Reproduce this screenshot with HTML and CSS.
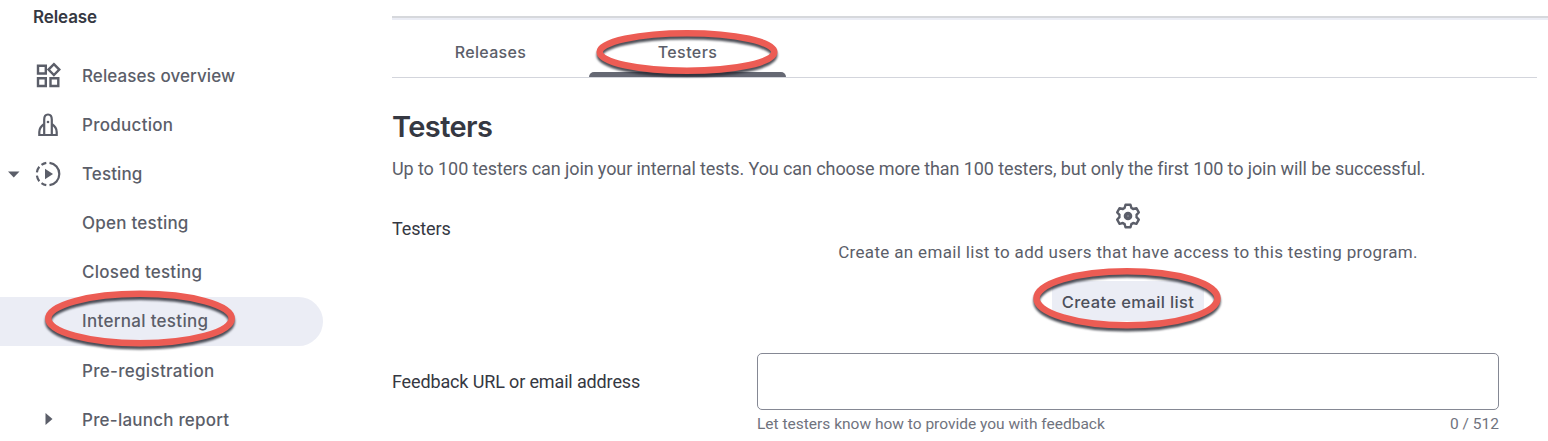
FILE: index.html
```html
<!DOCTYPE html>
<html lang="en">
<head>
<meta charset="utf-8">
<title>Internal testing</title>
<link rel="stylesheet" href="styles.css">
</head>
<body>
<div class="app">
  <nav class="sidebar">
    <h2 class="nav-title"><span class="t-release">Release</span></h2>
    <a class="nav-item">
      <span class="caret"></span>
      <svg class="icon" viewBox="0 0 28 28"><g fill="none" stroke="currentColor" stroke-width="2.4"><path d="M4 3.700h7.800v7.800H4zM4 16.200h7.800v7.800H4zM16.500 16.200h7.800v7.800h-7.800zM19.900 2.100l5.400 5.500-5.400 5.500-5.400-5.500z"/></g></svg>
      <span class="t-overview">Releases overview</span>
    </a>
    <a class="nav-item">
      <span class="caret"></span>
      <svg class="icon" viewBox="0 0 28 28"><g fill="none" stroke="currentColor" stroke-width="2.2"><path d="M10.200 24V8.500C10.200 5.200 11.600 3.500 14 3.500s3.800 1.700 3.800 5V24M10.200 13C8 14.500 5.300 18 5.300 21v3h17.400v-3c0-3-2.700-6.500-4.900-8"/></g><circle cx="14" cy="11" r="1.300" fill="currentColor"/></svg>
      <span class="t-production">Production</span>
    </a>
    <a class="nav-item">
      <span class="caret"><svg class="caret-icon" viewBox="0 0 12 12"><path d="M0 3.500h11.500L5.750 9.500z" fill="currentColor"/></svg></span>
      <svg class="icon" viewBox="0 0 28 28"><path d="M15.500 2.800a11.300 11.300 0 0 1 0 22.400M12.300 25.200a11.300 11.300 0 0 1-4.800-2M5.300 21.200a11.300 11.300 0 0 1-2.400-5.500M2.900 12.300a11.300 11.300 0 0 1 2.400-5.500M7.500 4.800a11.300 11.300 0 0 1 4.800-2" fill="none" stroke="currentColor" stroke-width="2.200"/><path d="M11 8.700v10.600l8-5.300z" fill="currentColor"/></svg>
      <span class="t-testing">Testing</span>
    </a>
    <a class="nav-item sub"><span class="t-open">Open testing</span></a>
    <a class="nav-item sub"><span class="t-closed">Closed testing</span></a>
    <a class="nav-item sub active"><span class="t-internal">Internal testing</span>
      <svg class="ring ring-nav" viewBox="0 0 200 70"><ellipse cx="100" cy="31.500" rx="91.700" ry="24.700"/></svg>
    </a>
    <a class="nav-item sub"><span class="t-prereg">Pre-registration</span></a>
    <a class="nav-item sub"><svg class="sub-caret" viewBox="0 0 8 12"><path d="M0.500 0v12L7.500 6z" fill="currentColor"/></svg><span class="t-prelaunch">Pre-launch report</span></a>
  </nav>
  <main class="content">
    <div class="top-edge"></div>
    <div class="tabs">
      <div class="tab"><span class="t-tab1">Releases</span></div>
      <div class="tab selected"><span class="t-tab2">Testers</span>
        <svg class="ring ring-tab" viewBox="0 0 200 60"><ellipse cx="100" cy="27" rx="87.300" ry="18.800"/></svg>
      </div>
    </div>
    <h1 class="heading"><span class="t-heading">Testers</span></h1>
    <p class="intro"><span class="t-intro">Up to 100 testers can join your internal tests. You can choose more than 100 testers, but only the first 100 to join will be successful.</span></p>
    <section class="row testers-row">
      <div class="label"><span class="t-label1">Testers</span></div>
      <div class="field empty">
        <svg class="gear" viewBox="0 0 28 28"><path d="M11.500 2.800h5l.9 3.200q1 .3 1.800 1l3.200-.8 2.400 4.200-2.300 2.400q.3 1.200 0 2.400l2.300 2.400-2.400 4.200-3.200-.8q-.8.7-1.800 1l-.9 3.200h-5l-.9-3.200q-1-.3-1.800-1l-3.200.8-2.400-4.200 2.300-2.400q-.3-1.200 0-2.400L3.200 10.400l2.400-4.200 3.200.8q.8-.7 1.800-1z" fill="none" stroke="currentColor" stroke-width="2.400" stroke-linejoin="round"/><circle cx="14" cy="14" r="4.300" fill="currentColor"/><circle cx="14" cy="14" r="0.700" fill="#a4a7af"/></svg>
        <p class="empty-text"><span class="t-empty">Create an email list to add users that have access to this testing program.</span></p>
        <button class="create"><span class="t-create">Create email list</span>
          <svg class="ring ring-create" viewBox="0 0 200 74"><ellipse cx="100" cy="33.300" rx="90.500" ry="27"/></svg>
        </button>
      </div>
    </section>
    <section class="row">
      <div class="label feedback-label"><span class="t-label2">Feedback URL or email address</span></div>
      <div class="field">
        <div class="input"></div>
        <div class="hints"><span class="t-hint">Let testers know how to provide you with feedback</span><span class="t-count">0 / 512</span></div>
      </div>
    </section>
  </main>
</div>
</body>
</html>
```
FILE: styles.css
```css
* { box-sizing: border-box; }
body { margin: 0; background: #fff; color: #5b5e69; font-family: Roboto, "Liberation Sans", sans-serif; overflow: hidden; }
h1, h2, p { margin: 0; }
.app { display: flex; width: 1548px; height: 441px; overflow: hidden; }
.sidebar { flex: none; width: 392px; font: 500 17px/20px Inter, sans-serif; }
.nav-title { height: 51px; padding: 8px 0 0 33px; font: 600 17px/18px Inter, sans-serif; letter-spacing: -.1px; color: #353842; }
.nav-item { position: relative; display: flex; align-items: center; width: 323px; height: 49.150px; white-space: nowrap; }
.nav-item > span:not(.caret) { padding-top: .4px; }
.t-overview { letter-spacing: .08px; }
.t-production { letter-spacing: .28px; }
.t-testing { letter-spacing: .1px; }
.t-open { letter-spacing: .23px; }
.t-closed { letter-spacing: .24px; }
.t-internal { letter-spacing: .3px; }
.t-prereg { letter-spacing: .3px; }
.t-prelaunch { letter-spacing: .22px; }
.caret { width: 26px; padding-left: 8px; flex: none; }
.caret-icon { display: block; width: 12px; height: 12px; }
.icon { width: 28px; height: 28px; margin: 0 20px 0 8px; flex: none; }
.sub { padding-left: 82px; }
.active { background: #ebedf5; border-radius: 0 25px 25px 0; }
.sub-caret { position: absolute; left: 45px; top: 18px; width: 8px; height: 12px; }
.ring { position: absolute; overflow: visible; pointer-events: none; filter: drop-shadow(0 3px 1.200px rgba(35, 38, 48, .8)); }
.ring ellipse { fill: none; stroke: #ec5c54; stroke-width: 6.500; }
.ring-nav { left: 40px; top: -10px; width: 200px; height: 70px; }
.content { flex: 1; min-width: 0; }
.top-edge { height: 21px; background: linear-gradient(#fff 16px, #d6d8dc 16px 18px, #ebedf5 18px 20px, #fff 20px); }
.tabs { display: flex; width: 1145px; height: 57px; border-bottom: 1px solid #d3d5dc; font: 500 16px/20px Inter, sans-serif; }
.tab { position: relative; display: flex; align-items: center; justify-content: center; width: 197px; height: 56px; padding-top: 6px; }
.t-tab1 { letter-spacing: .3px; }
.t-tab2 { letter-spacing: .42px; }
.tab.selected::before { content: ""; position: absolute; left: 0; bottom: 0; width: 197px; height: 5px; border-radius: 5px 5px 0 0; background: #656873; }
.ring-tab { left: -2px; top: 4px; width: 200px; height: 60px; }
.heading { padding-top: 32px; font: 600 29px/34px Inter, sans-serif; letter-spacing: -.6px; color: #353842; }
.intro { padding-top: 14px; font-size: 18px; line-height: 22px; letter-spacing: -.097px; white-space: nowrap; }
.row { display: flex; }
.testers-row { height: 173px; }
.label { width: 365px; padding-top: 38px; font-size: 18px; line-height: 22px; letter-spacing: -.14px; color: #353842; }
.feedback-label { padding-top: 18px; }
.field { width: 742px; }
.empty { display: flex; flex-direction: column; align-items: center; }
.gear { width: 28px; height: 28px; margin-top: 22px; }
.empty-text { margin-top: 11px; font-size: 17px; line-height: 22px; letter-spacing: .335px; white-space: nowrap; }
.create { position: relative; width: 152px; height: 40px; margin-top: 18px; padding: 0; border: 0; border-radius: 6px; background: #ebedf5; color: #4d505b; font: 500 16.500px/42px Inter, sans-serif; letter-spacing: .38px; white-space: nowrap; }
.ring-create { left: -25px; top: -16px; width: 200px; height: 74px; }
.input { height: 57px; border: 1.500px solid #858894; border-radius: 5px; }
.hints { display: flex; justify-content: space-between; padding-top: 4px; font-size: 15.500px; line-height: 20px; color: #70737e; }
```
